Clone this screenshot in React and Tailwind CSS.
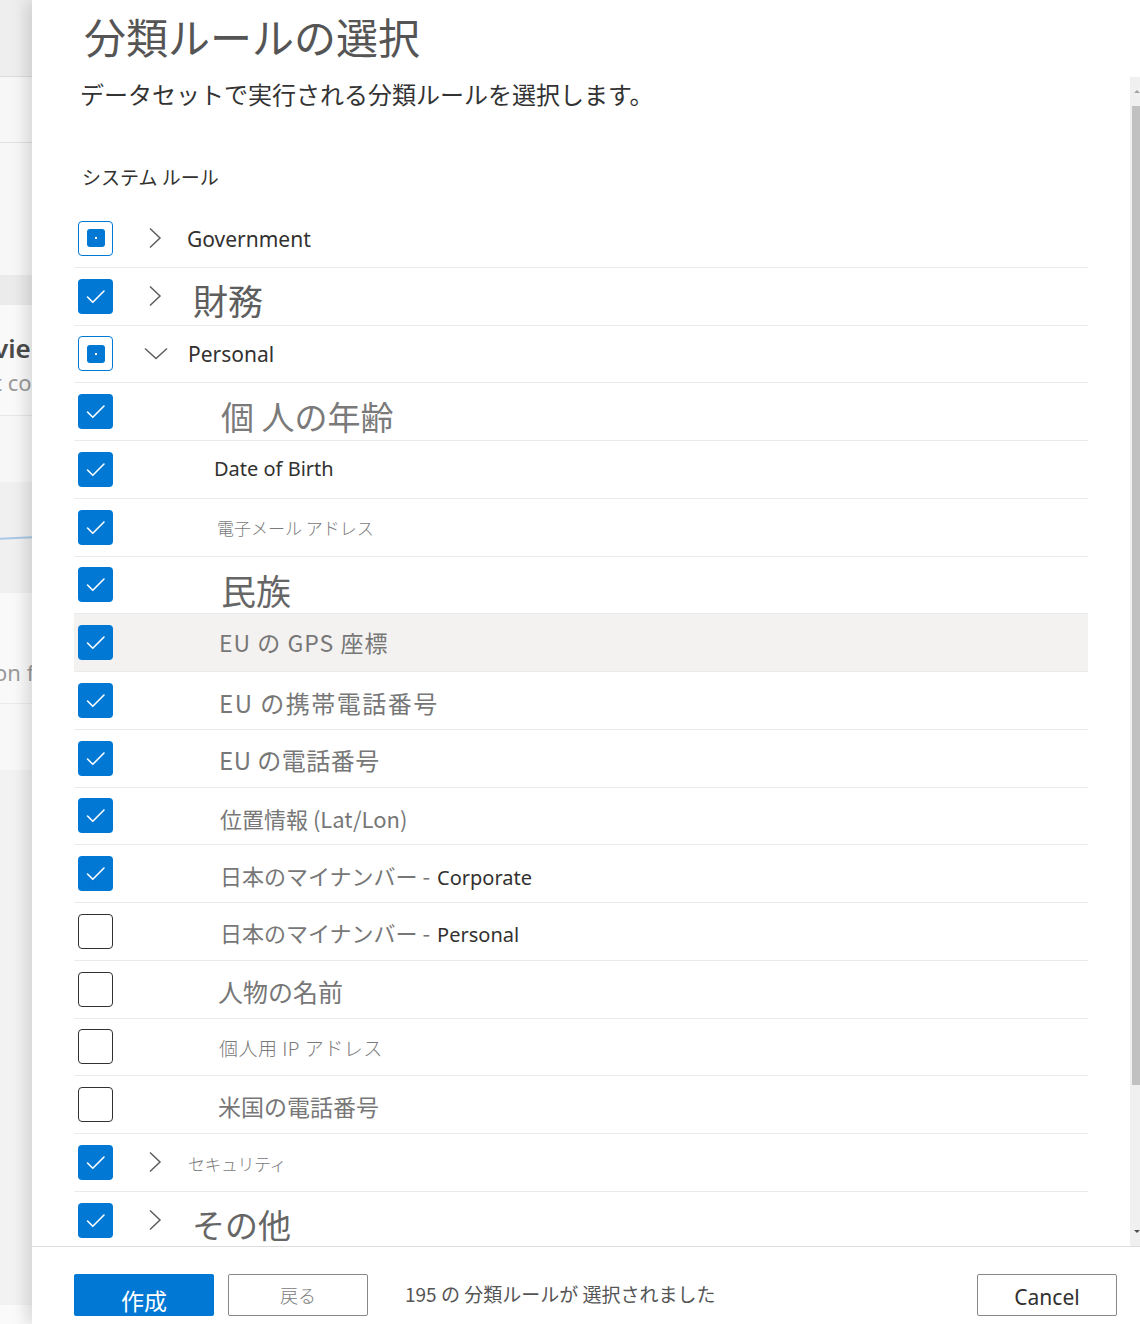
import React from "react";

const JP = { fontFamily: '"Noto Sans CJK JP", "Noto Sans", sans-serif' };
const LAT = { fontFamily: '"Noto Sans", "Noto Sans CJK JP", sans-serif' };

function Checkbox({ state }) {
  if (state === "checked") {
    return (
      <div className="w-[35px] h-[35px] shrink-0 rounded-[4px] bg-[#0078d4] flex items-center justify-center">
        <svg width="35" height="35" viewBox="0 0 35 35">
          <path d="M9.5 18 L14.8 23.3 L26 12" fill="none" stroke="#ffffff" strokeWidth="1.6" strokeLinecap="round" strokeLinejoin="round" />
        </svg>
      </div>
    );
  }
  if (state === "ind") {
    return (
      <div className="w-[35px] h-[35px] shrink-0 rounded-[4px] border border-[#0078d4] bg-white flex items-center justify-center">
        <div className="w-[18px] h-[18px] rounded-[3px] bg-[#0078d4] flex items-center justify-center">
          <div className="w-[2px] h-[2px] bg-white" />
        </div>
      </div>
    );
  }
  return <div className="w-[35px] h-[35px] shrink-0 rounded-[4px] border border-[#323130] bg-white" />;
}

function ChevronRight() {
  return (
    <svg width="14" height="22" viewBox="0 0 14 22" className="shrink-0">
      <path d="M2 1.5 L12 11 L2 20.5" fill="none" stroke="#605e5c" strokeWidth="1.5" />
    </svg>
  );
}

function ChevronDown() {
  return (
    <svg width="24" height="13" viewBox="0 0 24 13" className="shrink-0">
      <path d="M1 1.5 L12 11.5 L23 1.5" fill="none" stroke="#605e5c" strokeWidth="1.5" />
    </svg>
  );
}

const rows = [
  { kind: "group", state: "ind", chev: "right", label: "Government", cls: "text-[21px] text-[#323130] mt-[2px]", font: LAT, ml: "ml-[25px]" },
  { kind: "group", state: "checked", chev: "right", label: "財務", cls: "text-[35px] text-[#5e5e5e] mt-[6px]", font: JP, ml: "ml-[31px]" },
  { kind: "group", state: "ind", chev: "down", label: "Personal", cls: "text-[21px] text-[#323130] mt-[2px]", font: LAT, ml: "ml-[20px]" },
  { kind: "child", state: "checked", label: "個 人の年齢", cls: "text-[33px] text-[#7a7a7a] mt-[10px] ml-[108px]", font: JP },
  { kind: "child", state: "checked", label: "Date of Birth", cls: "text-[20px] text-[#323130] ml-[101px]", font: LAT },
  { kind: "child", state: "checked", label: "電子メール アドレス", cls: "text-[17px] text-[#7a7a7a] ml-[104px] font-light", font: JP },
  { kind: "child", state: "checked", label: "民族", cls: "text-[35px] text-[#666666] mt-[10px] ml-[108px]", font: JP },
  { kind: "child", state: "checked", label: "EU の GPS 座標", cls: "text-[23px] text-[#777777] ml-[106px] tracking-[1px]", font: JP, hover: true },
  { kind: "child", state: "checked", label: "EU の携帯電話番号", cls: "text-[24px] text-[#777777] ml-[106px] mt-[6px] tracking-[1.5px]", font: JP },
  { kind: "child", state: "checked", label: "EU の電話番号", cls: "text-[24px] text-[#777777] ml-[106px] mt-[4px] tracking-[0.5px]", font: JP },
  { kind: "child", state: "checked", label: "位置情報 (Lat/Lon)", cls: "text-[22px] text-[#777777] ml-[107px] mt-[4px]", font: JP },
  { kind: "child", state: "checked", label: "日本のマイナンバー - ", extra: "Corporate", cls: "text-[22px] text-[#777777] ml-[107px] mt-[4px]", font: JP },
  { kind: "child", state: "un", label: "日本のマイナンバー - ", extra: "Personal", cls: "text-[22px] text-[#777777] ml-[107px] mt-[4px]", font: JP },
  { kind: "child", state: "un", label: "人物の名前", cls: "text-[25px] text-[#777777] ml-[105px] mt-[4px]", font: JP },
  { kind: "child", state: "un", label: "個人用 IP アドレス", cls: "text-[19px] text-[#7a7a7a] ml-[106px] mt-[2px] font-light tracking-[0.5px]", font: JP },
  { kind: "child", state: "un", label: "米国の電話番号", cls: "text-[23px] text-[#777777] ml-[105px] mt-[4px]", font: JP },
  { kind: "group", state: "checked", chev: "right", label: "セキュリティ", cls: "text-[17px] text-[#7a7a7a] font-light mt-[2px] tracking-[-0.5px]", font: JP, ml: "ml-[26px]" },
  { kind: "group", state: "checked", chev: "right", label: "その他", cls: "text-[33px] text-[#666666] mt-[8px]", font: JP, ml: "ml-[30px]" },
];

function Row({ r }) {
  return (
    <div
      className={
        "flex items-center h-[57.75px] shrink-0 border-b border-[#edebe9] pl-[4px] " +
        (r.hover ? "bg-[#f3f2f1]" : "")
      }
    >
      <Checkbox state={r.state} />
      {r.kind === "group" ? (
        <>
          <div className={r.chev === "down" ? "ml-[31px] flex items-center" : "ml-[35px] flex items-center"}>
            {r.chev === "down" ? <ChevronDown /> : <ChevronRight />}
          </div>
          <span className={r.ml + " leading-none whitespace-pre " + r.cls} style={r.font}>
            {r.label}
          </span>
        </>
      ) : (
        <span className={"leading-none whitespace-pre " + r.cls} style={r.font}>
          {r.label}
          {r.extra ? (
            <span className="text-[20px] text-[#323130] ml-[2px]" style={LAT}>
              {r.extra}
            </span>
          ) : null}
        </span>
      )}
    </div>
  );
}

function Backdrop() {
  return (
    <div className="w-[32px] shrink-0 h-full flex flex-col overflow-hidden bg-[#f4f4f4]" style={LAT}>
      <div className="h-[77px] bg-[#eeeeee] border-b border-[#dcdcdc]" />
      <div className="h-[66px] bg-[#f7f7f7] border-b border-[#e0e0e0]" />
      <div className="h-[132px] bg-[#f7f7f7]" />
      <div className="h-[30px] bg-[#ebebeb]" />
      <div className="h-[110px] bg-[#f9f9f9] flex flex-col justify-start overflow-hidden">
        <div className="mt-[30px] -ml-[6px] text-[26px] leading-[26px] text-[#4a4a4a] whitespace-nowrap font-semibold">vie</div>
        <div className="mt-[10px] -ml-[6px] text-[22px] leading-[22px] text-[#9a9a9a] whitespace-nowrap">t co</div>
      </div>
      <div className="h-[67px] bg-[#f7f7f7] border-t border-[#e6e6e6]" />
      <div className="h-[111px] bg-[#f0f0f0] relative">
        <div className="absolute left-0 right-0 top-[55px] h-[2px] bg-[#a9c8e6] -rotate-3" />
      </div>
      <div className="h-[110px] bg-[#f9f9f9] flex flex-col justify-end overflow-hidden">
        <div className="mb-[20px] -ml-[6px] text-[22px] leading-[22px] text-[#9a9a9a] whitespace-nowrap">on f</div>
      </div>
      <div className="h-[67px] bg-[#f8f8f8] border-t border-[#ececec]" />
      <div className="h-[535px] bg-[#f2f2f2]" />
      <div className="flex-1 bg-[#fafafa]" />
    </div>
  );
}

export default function App() {
  return (
    <div className="w-[1140px] h-[1324px] flex overflow-hidden bg-white">
      <Backdrop />
      <div className="relative z-10 flex-1 h-full flex flex-col bg-white shadow-[-6px_0_14px_rgba(0,0,0,0.13)]">
        <div className="h-[77px] shrink-0 pl-[52px] flex items-start">
          <h1 className="text-[42px] leading-none mt-[15px] text-[#555555] font-normal" style={JP}>
            分類ルールの選択
          </h1>
        </div>
        <div className="flex-1 min-h-0 flex">
          <div className="flex-1 min-w-0 overflow-hidden px-[42px] flex flex-col">
            <p className="pl-[6px] text-[24px] leading-[32px] text-[#333333] mt-[1px]" style={JP}>
              データセットで実行される分類ルールを選択します。
            </p>
            <p className="pl-[8px] text-[19px] leading-[24px] text-[#323130] mt-[55px]" style={JP}>
              システム ルール
            </p>
            <div className="mt-[21px] flex flex-col">
              {rows.map((r, i) => (
                <Row key={i} r={r} />
              ))}
            </div>
          </div>
          <div className="w-[10px] shrink-0 bg-[#f0f0f0] flex flex-col items-center">
            <div className="h-[29px] w-full flex items-center justify-center">
              <div className="w-0 h-0 border-l-[3px] border-r-[3px] border-b-[3px] border-l-transparent border-r-transparent border-b-[#a3a3a3] ml-[4px]" />
            </div>
            <div className="w-[8px] ml-[2px] h-[979px] bg-[#c1c1c1]" />
            <div className="flex-1" />
            <div className="h-[29px] w-full flex items-center justify-center">
              <div className="w-0 h-0 border-l-[3px] border-r-[3px] border-t-[3px] border-l-transparent border-r-transparent border-t-[#505050] ml-[4px]" />
            </div>
          </div>
        </div>
        <div className="h-[78px] shrink-0 border-t border-[#dcdcdc] flex items-start pt-[27px] pl-[42px] pr-[23px]">
          <button className="w-[140px] h-[42px] rounded-[2px] bg-[#0078d4] text-white text-[23px] leading-none flex items-center justify-center pt-[10px]" style={JP}>
            作成
          </button>
          <button className="ml-[14px] w-[140px] h-[42px] rounded-[2px] border border-[#8a8886] bg-white text-[#7a7a7a] text-[18px] font-light leading-none flex items-center justify-center" style={JP}>
            戻る
          </button>
          <span className="ml-[37px] mt-[10px] text-[19px] leading-none text-[#555555] whitespace-pre" style={JP}>
            195 の 分類ルールが 選択されました
          </span>
          <div className="flex-1" />
          <button className="w-[140px] h-[42px] rounded-[2px] border border-[#8a8886] bg-white text-[#323130] text-[21px] leading-none flex items-center justify-center pt-[4px]" style={LAT}>
            Cancel
          </button>
        </div>
      </div>
    </div>
  );
}
